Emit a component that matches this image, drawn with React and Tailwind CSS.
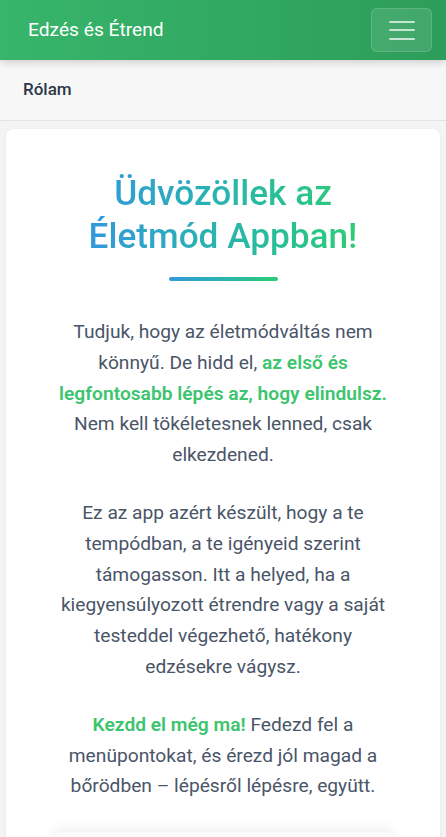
import React from "react";

export default function App() {
  return (
    <div className="min-h-[837px] bg-[#f4f4f4]" style={{ fontFamily: "Roboto, 'Noto Sans', sans-serif" }}>
      <header className="relative z-10 flex h-[60px] items-center justify-between bg-gradient-to-r from-[#37b56b] to-[#2d9d5a] pl-7 pr-[14px] shadow-[0_2px_8px_rgba(0,0,0,0.18)]">
        <span className="text-[19.2px] font-normal text-white">Edzés és Étrend</span>
        <button className="flex h-[44px] w-[61px] flex-col items-center justify-center gap-[6.5px] rounded-md border border-white/15 bg-white/10">
          <span className="block h-[2px] w-[26px] rounded bg-white/70" />
          <span className="block h-[2px] w-[26px] rounded bg-white/70" />
          <span className="block h-[2px] w-[26px] rounded bg-white/70" />
        </button>
      </header>
      <nav className="flex h-[61px] items-center border-b border-[#e3e3e3] bg-[#f7f7f7] px-[23px]">
        <span className="text-[17px] font-medium text-[#2d3748]">Rólam</span>
      </nav>
      <main className="px-[6px] pt-[8px]">
        <section className="rounded-t-lg bg-white px-[50px] pb-[60px] pt-[43px] text-center shadow-[0_1px_6px_rgba(0,0,0,0.05)]">
          <h1 className="inline-block bg-gradient-to-r from-[#3498db] to-[#2ecc71] bg-clip-text text-[35.2px] font-medium leading-[43px] text-transparent">
            Üdvözöllek az
            <br />
            Életmód Appban!
          </h1>
          <div className="mx-auto mt-[19px] h-[4px] w-[109px] rounded-full bg-gradient-to-r from-[#3498db] to-[#2ecc71]" />
          <div className="mt-[36px] flex flex-col gap-[27px] text-[19.2px] leading-[30.8px] text-[#4a5568]">
            <p>
              Tudjuk, hogy az életmódváltás nem könnyű. De hidd el,{" "}
              <strong className="font-semibold text-[#3cc46e]">az első és legfontosabb lépés az, hogy elindulsz.</strong>{" "}
              Nem kell tökéletesnek lenned, csak elkezdened.
            </p>
            <p>
              Ez az app azért készült, hogy a te tempódban, a te igényeid szerint támogasson. Itt a helyed, ha a kiegyensúlyozott étrendre vagy a saját testeddel végezhető, hatékony edzésekre vágysz.
            </p>
            <p>
              <strong className="font-semibold text-[#3cc46e]">Kezdd el még ma!</strong> Fedezd fel a menüpontokat, és érezd jól magad a bőrödben – lépésről lépésre, együtt.
            </p>
          </div>
          <div className="mx-[-4px] mt-[30px] h-[120px] rounded-lg bg-[#fbfbfb] shadow-[0_-4px_12px_rgba(0,0,0,0.06)]" />
        </section>
      </main>
    </div>
  );
}
